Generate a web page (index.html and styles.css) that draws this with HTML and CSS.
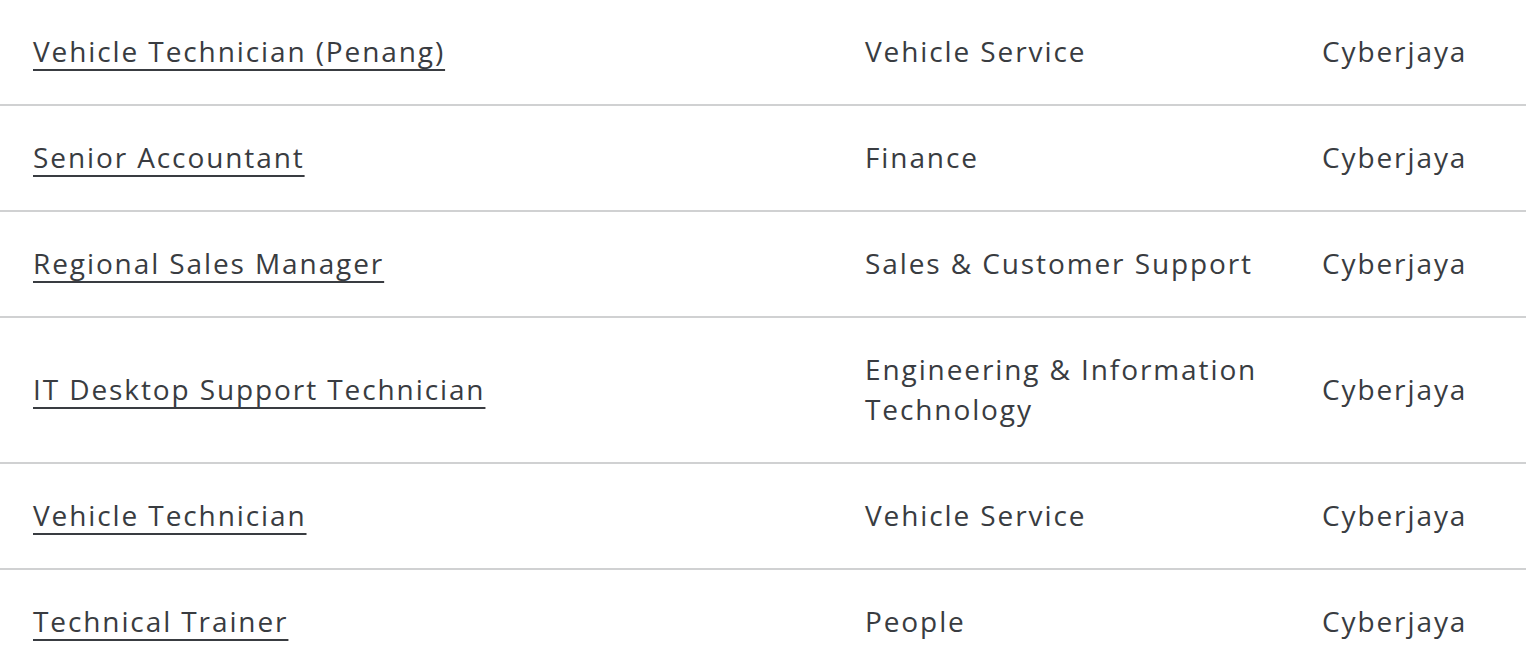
FILE: index.html
```html
<!DOCTYPE html>
<html lang="en">
<head>
<meta charset="utf-8">
<title>Jobs</title>
<link rel="stylesheet" href="styles.css">
</head>
<body>
<div class="jobs">
  <div class="row">
    <div class="cell title"><a href="#">Vehicle Technician (Penang)</a></div>
    <div class="cell dept">Vehicle Service</div>
    <div class="cell loc">Cyberjaya</div>
  </div>
  <div class="row">
    <div class="cell title"><a href="#">Senior Accountant</a></div>
    <div class="cell dept">Finance</div>
    <div class="cell loc">Cyberjaya</div>
  </div>
  <div class="row">
    <div class="cell title"><a href="#">Regional Sales Manager</a></div>
    <div class="cell dept">Sales &amp; Customer Support</div>
    <div class="cell loc">Cyberjaya</div>
  </div>
  <div class="row">
    <div class="cell title"><a href="#">IT Desktop Support Technician</a></div>
    <div class="cell dept">Engineering &amp; Information Technology</div>
    <div class="cell loc">Cyberjaya</div>
  </div>
  <div class="row">
    <div class="cell title"><a href="#">Vehicle Technician</a></div>
    <div class="cell dept">Vehicle Service</div>
    <div class="cell loc">Cyberjaya</div>
  </div>
  <div class="row">
    <div class="cell title"><a href="#">Technical Trainer</a></div>
    <div class="cell dept">People</div>
    <div class="cell loc">Cyberjaya</div>
  </div>
</div>
</body>
</html>
```
FILE: styles.css
```css
html, body {
  margin: 0;
  padding: 0;
  background: #ffffff;
}
body {
  font-family: "Open Sans", "Liberation Sans", sans-serif;
  font-size: 28px;
  letter-spacing: 1.9px;
  color: #393c41;
  overflow: hidden;
}
.row {
  display: grid;
  grid-template-columns: 832px 457px 1fr;
  align-items: center;
  padding: 31px 0 33px 33px;
  border-bottom: 2px solid #d0d1d2;
  line-height: 40px;
}
.row:last-child {
  border-bottom: none;
}
.dept {
  max-width: 420px;
}
.title a {
  color: #393c41;
  text-decoration: underline;
  text-decoration-thickness: 2px;
  text-underline-offset: 7px;
}
```
